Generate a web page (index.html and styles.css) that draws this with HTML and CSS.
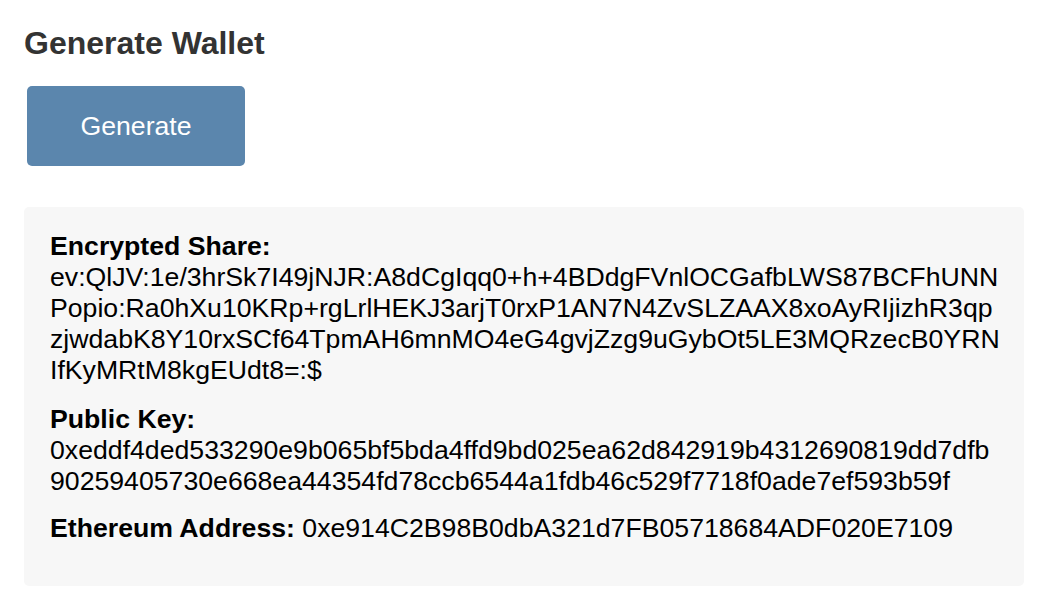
FILE: index.html
```html
<!DOCTYPE html>
<html lang="en">
<head>
<meta charset="utf-8">
<title>Generate Wallet</title>
<link rel="stylesheet" href="styles.css">
</head>
<body>
<main class="page">
  <h1 class="title">Generate Wallet</h1>
  <button class="generate-btn" type="button">Generate</button>
  <section class="result">
    <p class="field"><strong>Encrypted Share:</strong> ev:QlJV:1e/3hrSk7I49jNJR:A8dCgIqq0+h+4BDdgFVnlOCGafbLWS87BCFhUNNPopio:Ra0hXu10KRp+rgLrlHEKJ3arjT0rxP1AN7N4ZvSLZAAX8xoAyRIjizhR3qpzjwdabK8Y10rxSCf64TpmAH6mnMO4eG4gvjZzg9uGybOt5LE3MQRzecB0YRNIfKyMRtM8kgEUdt8=:$</p>
    <p class="field field-key"><strong>Public Key:</strong> 0xeddf4ded533290e9b065bf5bda4ffd9bd025ea62d842919b4312690819dd7dfb90259405730e668ea44354fd78ccb6544a1fdb46c529f7718f0ade7ef593b59f</p>
    <p class="field"><strong>Ethereum Address:</strong> 0xe914C2B98B0dbA321d7FB05718684ADF020E7109</p>
  </section>
</main>
</body>
</html>
```
FILE: styles.css
```css
html, body {
  margin: 0;
  padding: 0;
  background: #ffffff;
}

body {
  font-family: "Liberation Sans", Arial, Helvetica, sans-serif;
}

.page {
  padding: 25px 22px 0 24px;
  width: 1000px;
}

.title {
  margin: 0;
  font-size: 32px;
  font-weight: bold;
  color: #333333;
  line-height: 37px;
}

.generate-btn {
  display: block;
  margin: 24px 0 0 3px;
  width: 218px;
  height: 80px;
  border: none;
  border-radius: 5px;
  background: #5b86ad;
  color: #ffffff;
  font-family: "Liberation Sans", Arial, Helvetica, sans-serif;
  font-size: 26.667px;
  padding: 0;
  cursor: pointer;
}

.result {
  margin-top: 41px;
  background: #f7f7f7;
  border-radius: 5px;
  padding: 24px 21px 24px 26px;
  color: #000000;
  font-size: 26.667px;
  line-height: 31px;
}

.field {
  margin: 0 0 18px 0;
  overflow-wrap: break-word;
}

.field-key {
  margin-bottom: 16px;
}
```
